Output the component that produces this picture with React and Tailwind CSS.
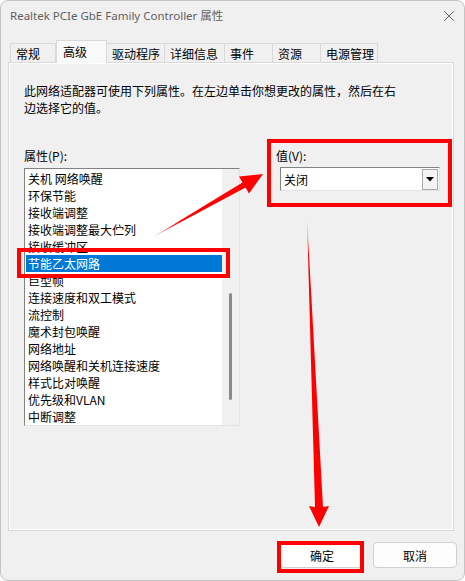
import React from 'react';

const cjk = { fontFamily: '"Noto Sans CJK SC", "Noto Sans", sans-serif' };

const tabs = [
  { name: '常规', w: 'w-[46px]' },
  { name: '高级', w: 'w-[51px]', active: true },
  { name: '驱动程序', w: 'w-[58px]' },
  { name: '详细信息', w: 'w-[60px]' },
  { name: '事件', w: 'w-[48px]' },
  { name: '资源', w: 'w-[48px]' },
  { name: '电源管理', w: 'w-[57px]' },
];

const props = [
  '关机 网络唤醒',
  '环保节能',
  '接收端调整',
  '接收端调整最大伫列',
  '接收缓冲区',
  '节能乙太网路',
  '巨型帧',
  '连接速度和双工模式',
  '流控制',
  '魔术封包唤醒',
  '网络地址',
  '网络唤醒和关机连接速度',
  '样式比对唤醒',
  '优先级和VLAN',
  '中断调整',
];

const App = () => {
  return (
    <div
      className="relative w-[465px] h-[581px] overflow-hidden rounded-[8px] border border-[#c4c4c4] bg-[#f0f0f0] text-[12px] text-black"
      style={cjk}
    >
      {/* title bar */}
      <div className="flex h-[39px] items-start justify-between pl-[9px] pr-[9px] pt-[6px]">
        <span className="text-[11.5px] leading-[18px] text-[#5f5f5f]" style={{ fontFamily: '"Noto Sans", "Noto Sans CJK SC", sans-serif' }}>
          Realtek PCIe GbE Family Controller 属性
        </span>
        <svg width="12" height="12" viewBox="0 0 12 12" className="mt-[3px]">
          <path d="M1 1 L11 11 M11 1 L1 11" stroke="#6b6b6b" strokeWidth="1" fill="none" />
        </svg>
      </div>

      {/* tabs */}
      <div className="flex h-[22px] items-end pl-[9px]">
        {tabs.map((t) =>
          t.active ? (
            <div
              key={t.name}
              className={`${t.w} relative z-10 -mb-[1px] h-[23px] border border-b-0 border-[#d9d9d9] bg-[#f9f9f9] pl-[6px] pt-[2px] leading-[17px]`}
            >
              {t.name}
            </div>
          ) : (
            <div
              key={t.name}
              className={`${t.w} h-[19px] border border-l-0 border-b-0 border-[#d9d9d9] bg-[#f0f0f0] pl-[5px] pt-[1px] leading-[17px] first:border-l`}
            >
              {t.name}
            </div>
          )
        )}
      </div>

      {/* tab page */}
      <div className="ml-[7px] h-[469px] w-[446px] border border-[#d9d9d9] bg-[#f0f0f0]">
        <div className="h-full w-full border border-white pl-[14px] pt-[18px]">
          <p className="leading-[17px]">
            此网络适配器可使用下列属性。在左边单击你想更改的属性，然后在右
            <br />
            边选择它的值。
          </p>

          <div className="mt-[31px] flex">
            {/* property list */}
            <div className="w-[216px]">
              <div className="leading-[17px]">属性(P):</div>
              <div className="mt-[4px] flex h-[258px] w-[216px] overflow-hidden border border-t-[#828282] border-l-[#828282] border-r-[#e3e3e3] border-b-[#e3e3e3] bg-white">
                <div className="w-[197px] pt-[1px]">
                  {props.map((p) => (
                    <div
                      key={p}
                      className={`ml-[1px] h-[17px] pl-[2px] leading-[17px] whitespace-nowrap ${
                        p === '节能乙太网路' ? 'bg-[#0078d7] text-white' : ''
                      }`}
                    >
                      {p}
                    </div>
                  ))}
                </div>
                <div className="flex w-[17px] justify-center bg-[#f0f0f0]">
                  <div className="mt-[124px] h-[107px] w-[3px] rounded-full bg-[#8a8a8a]" />
                </div>
              </div>
            </div>

            {/* value */}
            <div className="ml-[36px]">
              <div className="leading-[17px]">值(V):</div>
              <div className="ml-[4px] mt-[3px] flex h-[24px] w-[160px] items-center border border-t-[#838383] border-l-[#838383] border-r-[#e3e3e3] border-b-[#e3e3e3] bg-white pl-[3px] pr-[1px]">
                <span className="flex-1 leading-[17px]">关闭</span>
                <div className="flex h-[21px] w-[16px] items-center justify-center border border-[#a9a9a9] bg-[#f4f4f4]">
                  <svg width="8" height="5" viewBox="0 0 8 5">
                    <path d="M0 0 H8 L4 4.5 Z" fill="#000" />
                  </svg>
                </div>
              </div>
            </div>
          </div>
        </div>
      </div>

      {/* buttons */}
      <div className="mt-[11px] flex justify-end gap-[9px] pr-[7px]">
        <button className="h-[26px] w-[84px] rounded-[4px] border border-[#d0d0d0] bg-white leading-[17px]">确定</button>
        <button className="h-[26px] w-[84px] rounded-[4px] border border-[#d0d0d0] bg-[#fdfdfd] leading-[17px]">取消</button>
      </div>

      {/* annotations */}
      <div className="absolute left-[16px] top-[247px] h-[30px] w-[213px] border-4 border-[#ff0000]" />
      <div className="absolute left-[266px] top-[138px] h-[68px] w-[185px] border-4 border-[#ff0000]" />
      <div className="absolute left-[276px] top-[540px] h-[32px] w-[87px] border-4 border-[#ff0000]" />

      <svg className="pointer-events-none absolute left-[-1px] top-[-1px]" width="465" height="581" viewBox="0 0 465 581">
        <defs>
          <linearGradient id="g1" x1="153" y1="237" x2="263" y2="174" gradientUnits="userSpaceOnUse">
            <stop offset="0" stopColor="#ff0000" stopOpacity="0.3" />
            <stop offset="0.25" stopColor="#ff0000" />
          </linearGradient>
          <linearGradient id="g2" x1="0" y1="218" x2="0" y2="527" gradientUnits="userSpaceOnUse">
            <stop offset="0" stopColor="#ff0000" stopOpacity="0.2" />
            <stop offset="0.12" stopColor="#ff0000" />
          </linearGradient>
        </defs>
        <polygon points="153,237 242.5,182.4 239,176.4 263,174 249,193.6 245.5,187.6" fill="url(#g1)" />
        <polygon points="307,218 315,507 309,506 319,527 329,506 323,507" fill="url(#g2)" />
      </svg>
    </div>
  );
};

export default App;
